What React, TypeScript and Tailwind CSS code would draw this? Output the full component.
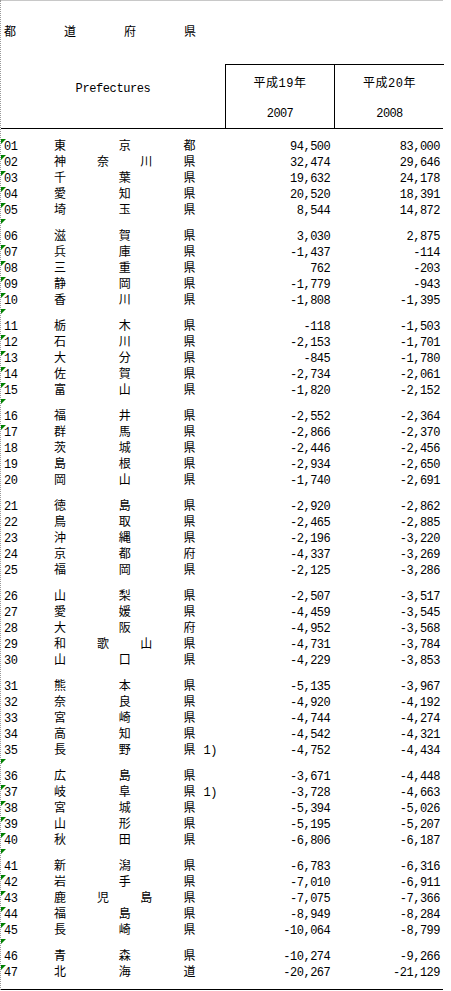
import React from 'react'

type Row = { code: string; name: string[]; note?: string; y2007: string; y2008: string; mark?: boolean }

const font = "font-['Liberation_Mono','Noto_Sans_CJK_JP',monospace]"

const raw: [string, string, string, string, string?][] = [
  ['01', '東京都', '94,500', '83,000'],
  ['02', '神奈川県', '32,474', '29,646'],
  ['03', '千葉県', '19,632', '24,178'],
  ['04', '愛知県', '20,520', '18,391'],
  ['05', '埼玉県', '8,544', '14,872'],
  ['06', '滋賀県', '3,030', '2,875'],
  ['07', '兵庫県', '-1,437', '-114'],
  ['08', '三重県', '762', '-203'],
  ['09', '静岡県', '-1,779', '-943'],
  ['10', '香川県', '-1,808', '-1,395'],
  ['11', '栃木県', '-118', '-1,503'],
  ['12', '石川県', '-2,153', '-1,701'],
  ['13', '大分県', '-845', '-1,780'],
  ['14', '佐賀県', '-2,734', '-2,061'],
  ['15', '富山県', '-1,820', '-2,152'],
  ['16', '福井県', '-2,552', '-2,364'],
  ['17', '群馬県', '-2,866', '-2,370'],
  ['18', '茨城県', '-2,446', '-2,456'],
  ['19', '島根県', '-2,934', '-2,650'],
  ['20', '岡山県', '-1,740', '-2,691'],
  ['21', '徳島県', '-2,920', '-2,862'],
  ['22', '鳥取県', '-2,465', '-2,885'],
  ['23', '沖縄県', '-2,196', '-3,220'],
  ['24', '京都府', '-4,337', '-3,269'],
  ['25', '福岡県', '-2,125', '-3,286'],
  ['26', '山梨県', '-2,507', '-3,517'],
  ['27', '愛媛県', '-4,459', '-3,545'],
  ['28', '大阪府', '-4,952', '-3,568'],
  ['29', '和歌山県', '-4,731', '-3,784'],
  ['30', '山口県', '-4,229', '-3,853'],
  ['31', '熊本県', '-5,135', '-3,967'],
  ['32', '奈良県', '-4,920', '-4,192'],
  ['33', '宮崎県', '-4,744', '-4,274'],
  ['34', '高知県', '-4,542', '-4,321'],
  ['35', '長野県', '-4,752', '-4,434', '1)'],
  ['36', '広島県', '-3,671', '-4,448'],
  ['37', '岐阜県', '-3,728', '-4,663', '1)'],
  ['38', '宮城県', '-5,394', '-5,026'],
  ['39', '山形県', '-5,195', '-5,207'],
  ['40', '秋田県', '-6,806', '-6,187'],
  ['41', '新潟県', '-6,783', '-6,316'],
  ['42', '岩手県', '-7,010', '-6,911'],
  ['43', '鹿児島県', '-7,075', '-7,366'],
  ['44', '福島県', '-8,949', '-8,284'],
  ['45', '長崎県', '-10,064', '-8,799'],
  ['46', '青森県', '-10,274', '-9,266'],
  ['47', '北海道', '-20,267', '-21,129'],
]

// rows carrying the little green corner marker
const marked = new Set(['01', '02', '03', '04', '05', '07', '08', '09', '10', '12', '13', '14', '15', '17', '37', '38', '39', '40', '42', '43', '44', '45', '47'])
// group gaps that also carry a marker (index of the group before the gap)
const markedGaps = new Set([0, 1, 2, 6, 7, 8])

const rows: Row[] = raw.map(([code, name, a, b, note]) => ({
  code, name: Array.from(name), note, y2007: a, y2008: b, mark: marked.has(code),
}))

const groups: Row[][] = []
for (let i = 0; i < rows.length; i += 5) groups.push(rows.slice(i, i + 5))

function Mark() {
  return <span className="absolute left-0 top-0 h-0 w-0 border-t-[5px] border-r-[5px] border-t-[#008000] border-r-transparent" />
}

function DataRow({ row }: { row: Row }) {
  return (
    <div className="relative flex h-4 items-center">
      {row.mark && <Mark />}
      <div className="w-[53px] pl-[3px] text-[12px] tracking-[-0.4px]">{row.code}</div>
      <div className="flex w-[142px] justify-between text-[12px]">
        {row.name.map((c, i) => <span key={i}>{c}</span>)}
      </div>
      <div className="w-[29px] pl-[8px] text-[12px] tracking-[-0.4px]">{row.note}</div>
      <div className="w-[109px] pr-[3px] text-right text-[12px] tracking-[-0.5px]">{row.y2007}</div>
      <div className="w-[110px] pr-[3px] text-right text-[12px] tracking-[-0.5px]">{row.y2008}</div>
    </div>
  )
}

export default function App() {
  return (
    <div className={`bg-white text-black ${font} leading-none`}>
      <div className="w-[443px] border-l border-dotted border-[#9a9a9a]">
        <div className="h-px bg-[#c8c8c8]" />

        <div className="flex h-[63px] items-center pl-[3px]">
          <div className="flex w-[192px] justify-between text-[12px]">
            <span>都</span><span>道</span><span>府</span><span>県</span>
          </div>
        </div>

        <div className="grid grid-cols-[224px_109px_110px] border-b border-black">
          <div className="flex h-16 items-start justify-center pt-[19px] text-[12px] tracking-[-0.4px]">Prefectures</div>
          {[['平成19年', '2007'], ['平成20年', '2008']].map(([jp, en]) => (
            <div key={en} className="flex h-16 flex-col items-center border-l border-t border-black pt-[13px]">
              <span className="text-[12px] tracking-[0.5px]">{jp}</span>
              <span className="mt-[18px] text-[12px] tracking-[-0.6px]">{en}</span>
            </div>
          ))}
        </div>

        <div className="flex flex-col border-b border-black pb-[8px] pt-[10px]">
          {groups.map((g, gi) => (
            <React.Fragment key={gi}>
              {g.map(r => <DataRow key={r.code} row={r} />)}
              {gi < groups.length - 1 && (
                <div className="relative h-[10px]">{markedGaps.has(gi) && <Mark />}</div>
              )}
            </React.Fragment>
          ))}
        </div>
      </div>
    </div>
  )
}
